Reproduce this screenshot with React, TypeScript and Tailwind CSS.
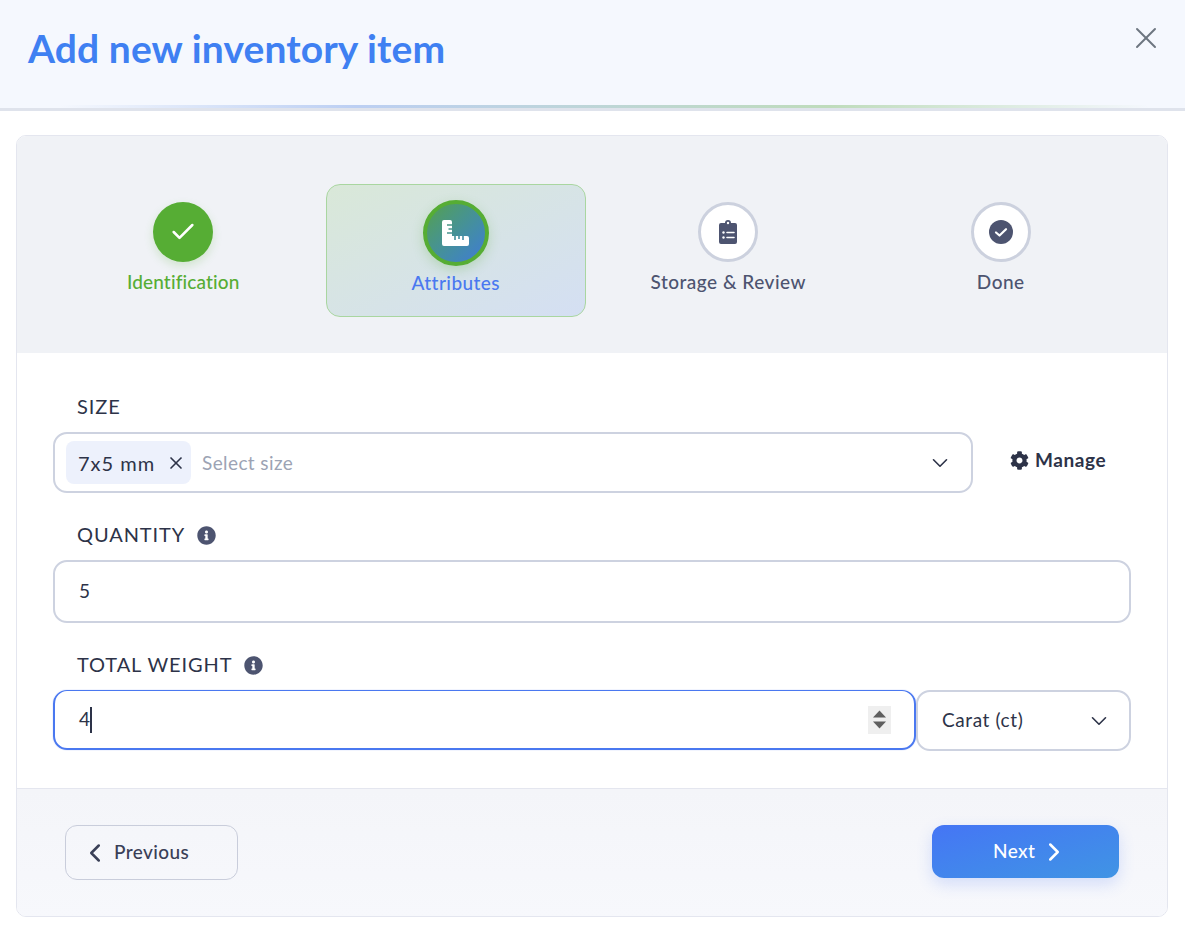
import React from "react";
import { Check, ChevronDown, ChevronLeft, ChevronRight, X } from "lucide-react";
import { FaCog, FaInfoCircle } from "react-icons/fa";

function Label({ text, info }: { text: string; info?: boolean }) {
  return (
    <div className="flex h-[24px] items-center pb-[2px] pl-[24px] text-[20px] leading-none tracking-[0.9px] text-[#2d3348]">
      <span>{text}</span>
      {info && <FaInfoCircle className="ml-[12px] mt-[2px] text-[19px] text-[#4d5470]" />}
    </div>
  );
}

function Spinner() {
  return (
    <div className="flex h-[28px] w-[23px] flex-col items-center justify-center gap-[3px] bg-[#efefef]">
      <svg width="15" height="8" viewBox="0 0 15 8"><path d="M7.5 0.5 L14 7.5 H1 Z" fill="#5f5f5f" /></svg>
      <svg width="15" height="8" viewBox="0 0 15 8"><path d="M1 0.5 H14 L7.5 7.5 Z" fill="#5f5f5f" /></svg>
    </div>
  );
}

function RulerIcon() {
  return (
    <svg width="27" height="26" viewBox="0 0 27 26" fill="#fff">
      <path d="M0 2 Q0 0 2 0 H8 Q10 0 10 2 V4.2 H5 V5.8 H10 V8.2 H6.5 V9.8 H10 V12.2 H5 V13.8 H10 V16 H12.2 V20 H13.8 V16 H16.2 V19 H17.8 V16 H20.2 V20 H21.8 V16 H25 Q27 16 27 18 V24 Q27 26 25 26 H2 Q0 26 0 24 Z" />
    </svg>
  );
}

function ClipboardIcon() {
  return (
    <svg width="18" height="24" viewBox="0 0 18 24" fill="none">
      <path d="M2 3 H6 A3 3 0 0 1 12 3 H16 Q18 3 18 5 V22 Q18 24 16 24 H2 Q0 24 0 22 V5 Q0 3 2 3 Z" fill="#4d5470" />
      <circle cx="9" cy="3" r="1.2" fill="#fff" />
      <circle cx="4.5" cy="12.5" r="1.2" fill="#fff" />
      <circle cx="4.5" cy="17.5" r="1.2" fill="#fff" />
      <path d="M8 12.5 H15 M8 17.5 H15" stroke="#fff" strokeWidth="1.6" strokeLinecap="round" />
    </svg>
  );
}

function DoneIcon() {
  return (
    <svg width="24" height="24" viewBox="0 0 24 24" fill="none">
      <circle cx="12" cy="12" r="12" fill="#4d5470" />
      <path d="M7 12.5 L10.5 15.5 L17 9.2" stroke="#fff" strokeWidth="2.2" strokeLinecap="round" strokeLinejoin="round" />
    </svg>
  );
}

export default function App() {
  return (
    <div className="min-h-[942px] bg-white font-['Lato','Noto_Sans',sans-serif] text-[#2d3348]">
      <header className="flex h-[111px] flex-col bg-[#f5f8fe]">
        <div className="flex flex-1 items-start justify-between pl-[28px] pr-[21px]">
          <h1 className="mt-[25px] text-[39px] font-bold leading-[46px] tracking-[0.1px] text-[#3f80f2]">Add new inventory item</h1>
          <X className="mt-[20px] h-[36px] w-[36px] text-[#6d7680]" strokeWidth={1.3} />
        </div>
        <div className="h-[3px] bg-[linear-gradient(90deg,transparent_5%,#bccff3_30%,#bfdcbc_70%,transparent_97%)]" />
        <div className="h-[3px] bg-[#dfe3ec]" />
      </header>

      <div className="ml-[16px] mr-[17px] mt-[24px] overflow-hidden rounded-[10px] border border-[#e4e6ef]">
        <section className="grid grid-cols-4 gap-[12px] bg-[#f0f2f6] px-[36px] pb-[36px] pt-[48px]">
          <div className="flex h-[133px] flex-col items-center pt-[18px]">
            <div className="flex h-[60px] w-[60px] items-center justify-center rounded-full bg-[#56ad34] shadow-[0_4px_10px_rgba(86,173,52,0.2)]">
              <Check className="h-[28px] w-[28px] text-white" strokeWidth={2.2} />
            </div>
            <div className="mt-[6px] text-[19px] font-medium tracking-[0.15px] text-[#56ad34]">Identification</div>
          </div>
          <div className="flex h-[133px] flex-col items-center rounded-[14px] border border-[#a9d6a0] bg-gradient-to-br from-[#d9e8d8] to-[#d4dff3] pt-[15px]">
            <div className="flex h-[66px] w-[66px] items-center justify-center rounded-full border-[4px] border-[#56ad34] bg-gradient-to-br from-[#56a045] to-[#4279d6] shadow-[0_4px_12px_rgba(86,173,52,0.25)]">
              <RulerIcon />
            </div>
            <div className="mt-[3px] text-[19px] font-medium tracking-[0.45px] text-[#4a78f0]">Attributes</div>
          </div>
          <div className="flex h-[133px] flex-col items-center pt-[18px]">
            <div className="flex h-[60px] w-[60px] items-center justify-center rounded-full border-[3px] border-[#ccd1de] bg-white">
              <ClipboardIcon />
            </div>
            <div className="mt-[6px] text-[19px] font-medium tracking-[0.5px] text-[#4d5470]">Storage &amp; Review</div>
          </div>
          <div className="flex h-[133px] flex-col items-center pt-[18px]">
            <div className="flex h-[60px] w-[60px] items-center justify-center rounded-full border-[3px] border-[#ccd1de] bg-white">
              <DoneIcon />
            </div>
            <div className="mt-[6px] text-[19px] font-medium tracking-[0.5px] text-[#4d5470]">Done</div>
          </div>
        </section>

        <section className="flex flex-col border-b border-[#e4e6ef] bg-white px-[36px] pb-[37px] pt-[42px]">
          <Label text="SIZE" />
          <div className="mt-[13px] flex items-center">
            <div className="flex h-[61px] w-[920px] items-center rounded-[14px] border-2 border-[#cdd2e0] pl-[11px] pr-[18px]">
              <div className="flex h-[43px] w-[125px] items-center justify-between rounded-[8px] bg-[#edf1fc] pl-[12px] pr-[5px] text-[20px] tracking-[1px]">
                <span>7x5 mm</span>
                <X className="h-[20px] w-[20px]" strokeWidth={2} />
              </div>
              <span className="ml-[11px] mt-[2px] text-[19px] tracking-[0.4px] text-[#9ca3b4]">Select size</span>
              <ChevronDown className="ml-auto h-[26px] w-[26px] text-[#2d3348]" strokeWidth={1.5} />
            </div>
            <div className="ml-[37px] flex items-center gap-[6px] pb-[4px] text-[19px] font-bold tracking-[0.6px] text-[#2d3348]">
              <FaCog className="text-[19px]" />
              <span>Manage</span>
            </div>
          </div>

          <div className="mt-[30px]"><Label text="QUANTITY" info /></div>
          <div className="mt-[13px] flex h-[63px] items-center rounded-[14px] border-2 border-[#cdd2e0] pl-[24px] text-[19px]">5</div>

          <div className="mt-[30px]"><Label text="TOTAL WEIGHT" info /></div>
          <div className="mt-[13px] flex h-[61px]">
            <div className="flex h-[60px] w-[863px] items-center rounded-[14px] border-2 border-t-[1px] border-[#4a78f0] pl-[24px] pr-[23px] text-[19px] shadow-[0_0_0_1px_rgba(74,120,240,0.08)]">
              <span>4</span>
              <span className="h-[26px] w-[2px] bg-[#2d3348]" />
              <div className="ml-auto"><Spinner /></div>
            </div>
            <div className="flex w-[215px] items-center justify-between rounded-[14px] border-2 border-[#cdd2e0] pl-[24px] pr-[17px] text-[19px] tracking-[0.6px]">
              <span>Carat (ct)</span>
              <ChevronDown className="h-[26px] w-[26px]" strokeWidth={1.5} />
            </div>
          </div>
        </section>

        <footer className="flex h-[127px] items-start justify-between bg-gradient-to-b from-[#f4f5f9] to-[#f7f8fc] px-[48px] pt-[36px]">
          <button className="flex h-[55px] w-[173px] items-center rounded-[12px] border border-[#c9cddb] pl-[14px] text-[19px] font-medium tracking-[0.4px] text-[#3a4057]">
            <ChevronLeft className="mr-[4px] h-[30px] w-[30px]" strokeWidth={2} />
            Previous
          </button>
          <button className="flex h-[53px] w-[187px] items-center justify-start gap-[4px] rounded-[12px] bg-gradient-to-br from-[#4575f5] to-[#4094e4] pl-[61px] text-[19px] font-medium tracking-[0.4px] text-white shadow-[0_6px_16px_rgba(69,117,245,0.2)]">
            Next
            <ChevronRight className="h-[30px] w-[30px]" strokeWidth={2} />
          </button>
        </footer>
      </div>
    </div>
  );
}
